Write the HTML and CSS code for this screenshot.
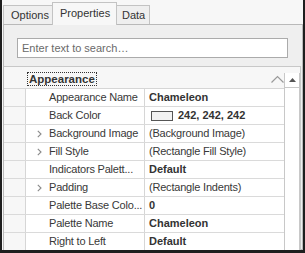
FILE: index.html
```html
<!DOCTYPE html>
<html>
<head>
<meta charset="utf-8">
<link rel="stylesheet" href="styles.css">
</head>
<body>
<div class="frame">
  <div class="tabs">
    <div class="tab">Options</div>
    <div class="tab active">Properties</div>
    <div class="tab">Data</div>
  </div>
  <div class="panel">
    <div class="search">Enter text to search…</div>
    <div class="grid">
      <div class="rows">
        <div class="cat">
          <span class="cat-label">Appearance</span>
          <svg class="collapse" width="13" height="8" viewBox="0 0 13 8"><path d="M0.5 7.5 L6.5 1.5 L12.5 7.5" fill="none" stroke="#9a9a9a" stroke-width="1.2"/></svg>
        </div>
        <div class="row"><div class="gutter"></div><div class="name">Appearance Name</div><div class="val b">Chameleon</div></div>
        <div class="row"><div class="gutter"></div><div class="name">Back Color</div><div class="val b"><span class="swatch"></span>242, 242, 242</div></div>
        <div class="row"><div class="gutter"></div><div class="name"><svg class="exp" width="5" height="8" viewBox="0 0 5 8"><path d="M0.8 0.8 L4 4 L0.8 7.2" fill="none" stroke="#8a8a8a" stroke-width="1.1"/></svg>Background Image</div><div class="val">(Background Image)</div></div>
        <div class="row"><div class="gutter"></div><div class="name"><svg class="exp" width="5" height="8" viewBox="0 0 5 8"><path d="M0.8 0.8 L4 4 L0.8 7.2" fill="none" stroke="#8a8a8a" stroke-width="1.1"/></svg>Fill Style</div><div class="val">(Rectangle Fill Style)</div></div>
        <div class="row"><div class="gutter"></div><div class="name">Indicators Palett...</div><div class="val b">Default</div></div>
        <div class="row"><div class="gutter"></div><div class="name"><svg class="exp" width="5" height="8" viewBox="0 0 5 8"><path d="M0.8 0.8 L4 4 L0.8 7.2" fill="none" stroke="#8a8a8a" stroke-width="1.1"/></svg>Padding</div><div class="val">(Rectangle Indents)</div></div>
        <div class="row"><div class="gutter"></div><div class="name">Palette Base Colo...</div><div class="val b">0</div></div>
        <div class="row"><div class="gutter"></div><div class="name">Palette Name</div><div class="val b">Chameleon</div></div>
        <div class="row"><div class="gutter"></div><div class="name">Right to Left</div><div class="val b">Default</div></div>
      </div>
      <div class="scrollbar">
        <div class="sb-up"><svg width="7" height="4" viewBox="0 0 7 4"><path d="M0 4 L3.5 0 L7 4 Z" fill="#555"/></svg></div>
      </div>
    </div>
  </div>
</div>
</body>
</html>
```
FILE: styles.css
```css
html, body {
  margin: 0;
  padding: 0;
}
body {
  font-family: "Liberation Sans", Arial, sans-serif;
  font-size: 11px;
  letter-spacing: -0.2px;
  color: #383838;
  background: #ffffff;
}
.frame {
  width: 305px;
  height: 253px;
  box-sizing: border-box;
  border-left: 2px solid #1e1e1e;
  border-right: 2px solid #1e1e1e;
  border-bottom: 3px solid #1e1e1e;
  background: #f7f7f7;
  overflow: hidden;
}
.tabs {
  height: 24px;
  display: flex;
  align-items: flex-end;
  padding-left: 1px;
}
.tab {
  height: 19px;
  box-sizing: border-box;
  border: 1px solid #c3c3c3;
  border-bottom: none;
  background: #efefef;
  padding: 0 7px;
  line-height: 18px;
  color: #333;
  position: relative;
  letter-spacing: 0;
}
.tab:first-child {
  width: 50px;
  padding-left: 7px;
}
.tab.active {
  height: 23px;
  margin-bottom: -1px;
  background: #f7f7f7;
  line-height: 21px;
  padding: 0 7px;
  width: 65px;
  margin-left: -1px;
  z-index: 1;
}
.tab:last-child {
  margin-left: -1px;
  width: 34px;
  padding-left: 5px;
}
.panel {
  margin-left: 1px;
  width: 300px;
  height: 226px;
  box-sizing: border-box;
  border: 1px solid #b9b9b9;
  background: #efefef;
  padding-top: 13px;
}
.search {
  margin-left: 13px;
  width: 271px;
  height: 20px;
  box-sizing: border-box;
  border: 1px solid #ababab;
  background: #fff;
  color: #6a6a6a;
  font-size: 11px;
  letter-spacing: 0;
  line-height: 18px;
  padding-left: 4px;
}
.grid {
  margin-top: 8px;
  border-top: 1px solid #c8c8c8;
  margin-right: 1px;
  border-right: 1px solid #c8c8c8;
  height: 200px;
  display: flex;
  padding-top: 6px;
  background: #f7f7f7;
}
.rows {
  width: 280px;
  flex: none;
}
.cat {
  height: 15px;
  display: flex;
  align-items: flex-start;
  border-bottom: 1px solid #d6d6d6;
  position: relative;
}
.cat-label {
  margin-left: 23px;
  margin-top: -1px;
  height: 14px;
  box-sizing: border-box;
  border: 1px dotted #333;
  padding: 0 1px;
  font-weight: bold;
  font-size: 11.5px;
  letter-spacing: 0;
  line-height: 12px;
  color: #333;
}
.collapse {
  position: absolute;
  left: 267px;
  top: 2px;
}
.row {
  height: 17px;
  display: flex;
  border-bottom: 1px solid #dadada;
}
.gutter {
  width: 21px;
  flex: none;
}
.name {
  flex: none;
  border-left: 1px solid #d6d6d6;
  border-right: 1px solid #d6d6d6;
  background: #fff;
  padding-left: 23px;
  box-sizing: border-box;
  width: 120px;
  line-height: 17px;
  white-space: nowrap;
  overflow: hidden;
  position: relative;
}
.exp {
  position: absolute;
  left: 11px;
  top: 5px;
}
.val {
  flex: 1;
  background: #fff;
  padding-left: 4px;
  line-height: 17px;
  white-space: nowrap;
  display: flex;
  align-items: center;
}
.b {
  font-weight: bold;
  color: #333;
  letter-spacing: 0;
}
.swatch {
  width: 20px;
  height: 8px;
  border: 1px solid #555;
  background: #f2f2f2;
  margin-left: 2px;
  margin-right: 5px;
  flex: none;
}
.scrollbar {
  width: 16px;
  flex: none;
  box-sizing: border-box;
  border-left: 1px solid #c8c8c8;
  border-right: 1px solid #c8c8c8;
  background: #fff;
}
.sb-up {
  height: 14px;
  border-bottom: 1px solid #c8c8c8;
  display: flex;
  align-items: center;
  justify-content: center;
}
.sb-up svg {
  display: block;
}
```
